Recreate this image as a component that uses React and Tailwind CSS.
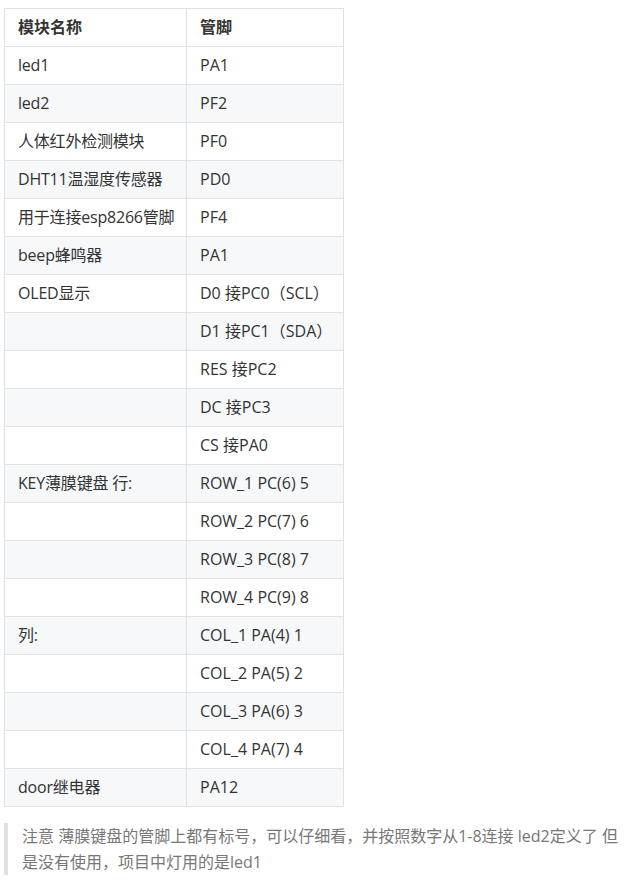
import React from "react";

const rows = [
  ["led1", "PA1"],
  ["led2", "PF2"],
  ["人体红外检测模块", "PF0"],
  ["DHT11温湿度传感器", "PD0"],
  ["用于连接esp8266管脚", "PF4"],
  ["beep蜂鸣器", "PA1"],
  ["OLED显示", "D0 接PC0（SCL）"],
  ["", "D1 接PC1（SDA）"],
  ["", "RES 接PC2"],
  ["", "DC 接PC3"],
  ["", "CS 接PA0"],
  ["KEY薄膜键盘 行:", "ROW_1 PC(6) 5"],
  ["", "ROW_2 PC(7) 6"],
  ["", "ROW_3 PC(8) 7"],
  ["", "ROW_4 PC(9) 8"],
  ["列:", "COL_1 PA(4) 1"],
  ["", "COL_2 PA(5) 2"],
  ["", "COL_3 PA(6) 3"],
  ["", "COL_4 PA(7) 4"],
  ["door继电器", "PA12"],
];

export default function App() {
  return (
    <div
      className="bg-white pt-[8px] pl-[4px] pr-[4px] text-[16px] text-[#333]"
      style={{ fontFamily: '"Open Sans", "Noto Sans CJK SC", sans-serif' }}
    >
      <table className="w-[339px] table-fixed border-collapse">
        <colgroup>
          <col className="w-[182px]" />
          <col className="w-[157px]" />
        </colgroup>
        <thead>
          <tr>
            <th className="border border-[#dfe2e5] px-[13px] py-[6px] text-left font-bold leading-[25px]">
              模块名称
            </th>
            <th className="border border-[#dfe2e5] px-[13px] py-[6px] text-left font-bold leading-[25px]">
              管脚
            </th>
          </tr>
        </thead>
        <tbody>
          {rows.map((r, i) => (
            <tr key={i} className={i % 2 === 1 ? "bg-[#f6f8fa]" : "bg-white"}>
              <td className="h-[38px] border border-[#dfe2e5] px-[13px] py-[6px] leading-[25px] whitespace-pre tracking-[-0.2px]">
                {r[0]}
              </td>
              <td className="h-[38px] border border-[#dfe2e5] px-[13px] py-[6px] leading-[25px] whitespace-pre">
                {r[1]}
              </td>
            </tr>
          ))}
        </tbody>
      </table>
      <blockquote className="mt-[16px] border-l-[4px] border-[#dfe2e5] pl-[14px] text-[#777] leading-[26px]">
        注意 薄膜键盘的管脚上都有标号，可以仔细看，并按照数字从1-8连接 led2定义了 但是没有使用，项目中灯用的是led1
      </blockquote>
    </div>
  );
}
